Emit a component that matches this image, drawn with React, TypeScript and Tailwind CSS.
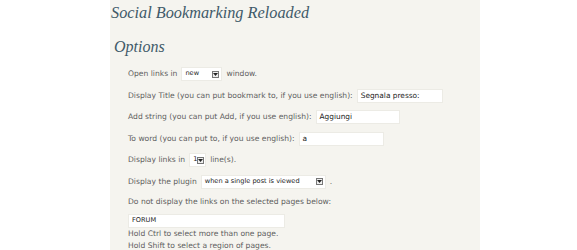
const label = "text-[7.6px] text-[#5e5e5e]";

function TextBox({ value, w }: { value: string; w: string }) {
  return (
    <span className={`inline-flex items-center h-[14px] bg-white border border-[#ecebe5] px-[3px] text-[7.4px] text-[#222] ${w}`}>
      {value}
    </span>
  );
}

function Select({ value, w }: { value: string; w: string }) {
  return (
    <span className={`inline-flex items-center justify-between h-[14px] bg-white border border-[#ecebe5] pl-[3px] pr-[2px] text-[6.6px] text-[#222] ${w}`}>
      <span>{value}</span>
      <span className="flex items-center justify-center w-[7px] h-[7px] border border-[#777] bg-[#eee]">
        <svg width="5" height="3" viewBox="0 0 5 3">
          <path d="M0 0 L5 0 L2.5 3 Z" fill="#222" />
        </svg>
      </span>
    </span>
  );
}

export default function App() {
  return (
    <div className="w-[577px] h-[250px] bg-white flex font-['DejaVu_Sans',sans-serif] overflow-hidden">
      <div className="ml-[110px] w-[370px] h-[250px] bg-[#f5f4ef] flex flex-col">
        <h1 className="ml-[1px] mt-[2px] text-[16.3px] leading-[22px] italic text-[#3f5a69] font-['Liberation_Serif',serif]">
          Social Bookmarking Reloaded
        </h1>
        <h2 className="ml-[4px] mt-[12px] text-[16px] leading-[22px] italic text-[#3f5a69] font-['Liberation_Serif',serif]">
          Options
        </h2>
        <div className="ml-[18px] mt-[5px] flex flex-col">
          <div className={`h-[22px] flex items-center gap-[4px] ${label}`}>
            <span>Open links in</span>
            <Select value="new" w="w-[41px]" />
            <span>window.</span>
          </div>
          <div className={`h-[21px] flex items-center gap-[4px] ${label}`}>
            <span>Display Title (you can put bookmark to, if you use english):</span>
            <TextBox value="Segnala presso:" w="w-[86px]" />
          </div>
          <div className={`h-[22px] flex items-center gap-[4px] ${label}`}>
            <span>Add string (you can put Add, if you use english):</span>
            <TextBox value="Aggiungi" w="w-[84px]" />
          </div>
          <div className={`h-[21px] flex items-center gap-[4px] ${label}`}>
            <span>To word (you can put to, if you use english):</span>
            <TextBox value="a" w="w-[85px]" />
          </div>
          <div className={`h-[22px] flex items-center gap-[4px] ${label}`}>
            <span>Display links in</span>
            <Select value="1" w="w-[17px]" />
            <span>line(s).</span>
          </div>
          <div className={`h-[21px] flex items-center gap-[4px] ${label}`}>
            <span>Display the plugin</span>
            <Select value="when a single post is viewed" w="w-[125px]" />
            <span>.</span>
          </div>
          <div className={`h-[20px] flex items-center ${label}`}>
            <span>Do not display the links on the selected pages below:</span>
          </div>
          <div className="mt-[2px] w-[157px] h-[14px] bg-white border border-[#ecebe5] px-[3px] flex items-center text-[6.6px] text-[#222]">
            FORUM
          </div>
          <div className={`h-[12px] flex items-center ${label}`}>Hold Ctrl to select more than one page.</div>
          <div className={`h-[12px] flex items-center ${label}`}>Hold Shift to select a region of pages.</div>
        </div>
      </div>
    </div>
  );
}
